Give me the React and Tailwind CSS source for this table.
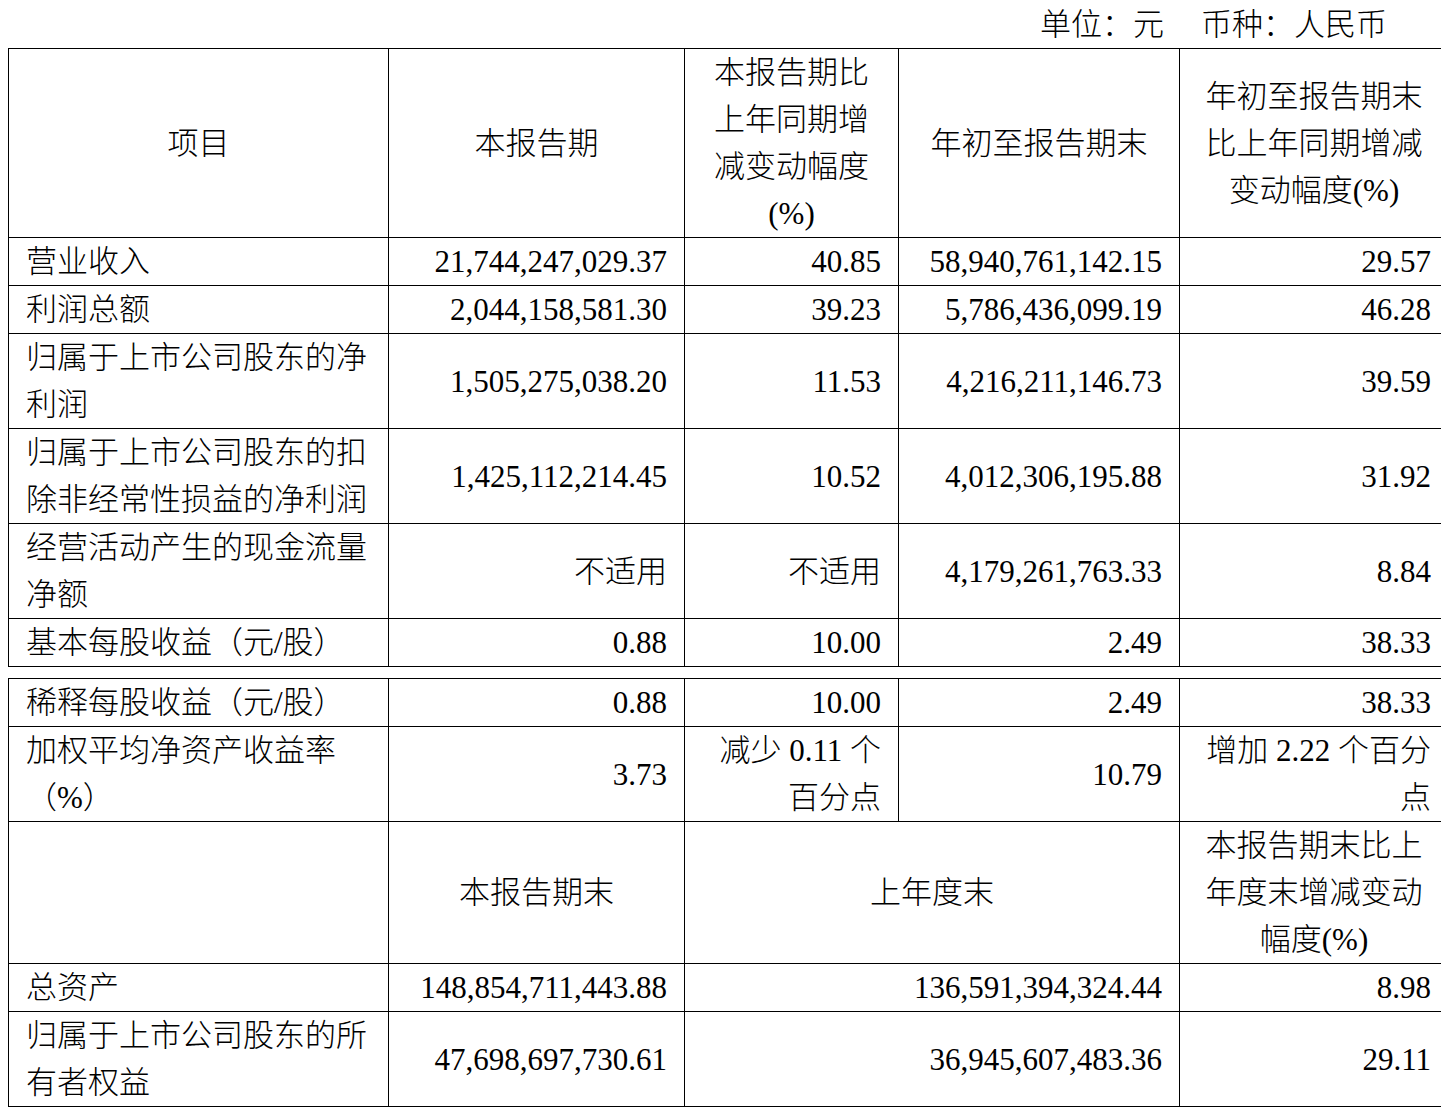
import React from "react";

const cell = "border border-black px-[17px] py-0 align-middle";
const num = `${cell} text-right whitespace-nowrap`;
const head = `${cell} text-center`;

const topRows = [
    {name: ["营业收入"], a: "21,744,247,029.37", b: "40.85", c: "58,940,761,142.15", d: "29.57"},
    {name: ["利润总额"], a: "2,044,158,581.30", b: "39.23", c: "5,786,436,099.19", d: "46.28"},
    {name: ["归属于上市公司股东的净", "利润"], a: "1,505,275,038.20", b: "11.53", c: "4,216,211,146.73", d: "39.59"},
    {name: ["归属于上市公司股东的扣", "除非经常性损益的净利润"], a: "1,425,112,214.45", b: "10.52", c: "4,012,306,195.88", d: "31.92"},
    {name: ["经营活动产生的现金流量", "净额"], a: "不适用", b: "不适用", c: "4,179,261,763.33", d: "8.84"},
    {name: ["基本每股收益（元/股）"], a: "0.88", b: "10.00", c: "2.49", d: "38.33"},
];

const Lines = ({items}) => items.map((t, i) => (
    <div key={i} className="whitespace-nowrap">{t}</div>
));

const Cols = () => (
    <colgroup>
        <col className="w-[380px]"/>
        <col className="w-[296px]"/>
        <col className="w-[214px]"/>
        <col className="w-[281px]"/>
        <col className="w-[269px]"/>
    </colgroup>
);

export default function App() {
    return <div className="w-[1441px] h-[1108px] overflow-hidden bg-white text-black text-[31px] leading-[47px] font-light font-['Liberation_Serif','Noto_Sans_CJK_SC',serif]">
        <div className="flex justify-end pr-[54px] h-[48px] items-center">
            <span>单位：元</span>
            <span className="ml-[37px]">币种：人民币</span>
        </div>
        <div className="pl-[8px]">
            <table className="table-fixed border-collapse w-[1440px]">
                <Cols/>
                <tbody>
                    <tr>
                        <td className={head}>项目</td>
                        <td className={head}>本报告期</td>
                        <td className={head}><Lines items={["本报告期比", "上年同期增", "减变动幅度", "(%)"]}/></td>
                        <td className={head}>年初至报告期末</td>
                        <td className={head}><Lines items={["年初至报告期末", "比上年同期增减", "变动幅度(%)"]}/></td>
                    </tr>
                    {topRows.map((r, i) => (
                        <tr key={i}>
                            <td className={`${cell} text-left`}><Lines items={r.name}/></td>
                            <td className={num}>{r.a}</td>
                            <td className={num}>{r.b}</td>
                            <td className={num}>{r.c}</td>
                            <td className={num}>{r.d}</td>
                        </tr>
                    ))}
                </tbody>
            </table>
            <table className="table-fixed border-collapse w-[1440px] mt-[11px]">
                <Cols/>
                <tbody>
                    <tr>
                        <td className={`${cell} text-left`}>稀释每股收益（元/股）</td>
                        <td className={num}>0.88</td>
                        <td className={num}>10.00</td>
                        <td className={num}>2.49</td>
                        <td className={num}>38.33</td>
                    </tr>
                    <tr>
                        <td className={`${cell} text-left`}><Lines items={["加权平均净资产收益率", "（%）"]}/></td>
                        <td className={num}>3.73</td>
                        <td className={num}><Lines items={["减少 0.11 个", "百分点"]}/></td>
                        <td className={num}>10.79</td>
                        <td className={num}><Lines items={["增加 2.22 个百分", "点"]}/></td>
                    </tr>
                    <tr>
                        <td className={cell}></td>
                        <td className={head}>本报告期末</td>
                        <td className={head} colSpan={2}>上年度末</td>
                        <td className={head}><Lines items={["本报告期末比上", "年度末增减变动", "幅度(%)"]}/></td>
                    </tr>
                    <tr>
                        <td className={`${cell} text-left`}>总资产</td>
                        <td className={num}>148,854,711,443.88</td>
                        <td className={num} colSpan={2}>136,591,394,324.44</td>
                        <td className={num}>8.98</td>
                    </tr>
                    <tr>
                        <td className={`${cell} text-left`}><Lines items={["归属于上市公司股东的所", "有者权益"]}/></td>
                        <td className={num}>47,698,697,730.61</td>
                        <td className={num} colSpan={2}>36,945,607,483.36</td>
                        <td className={num}>29.11</td>
                    </tr>
                </tbody>
            </table>
        </div>
    </div>
}
